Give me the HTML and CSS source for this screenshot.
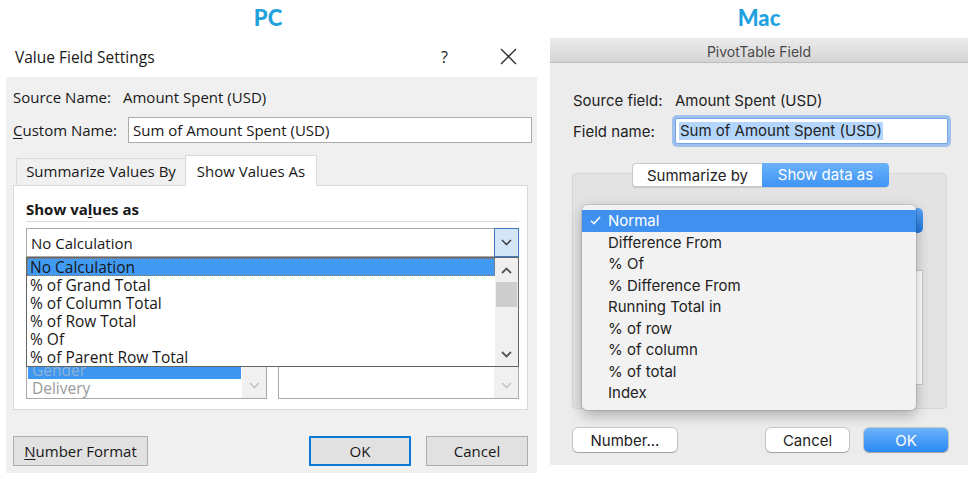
FILE: index.html
```html
<!DOCTYPE html>
<html>
<head>
<meta charset="utf-8">
<title>Value Field Settings – PC vs Mac</title>
<link rel="stylesheet" href="styles.css">
</head>
<body>
<div class="page">
  <section class="col col-pc">
    <div class="os-label">PC</div>
    <div class="win">
      <div class="win-title">
        <span class="win-title-text">Value Field Settings</span>
        <span class="win-help">?</span>
        <svg class="win-close" width="17" height="17" viewBox="0 0 17 17"><path d="M1 1 L16 16 M16 1 L1 16" stroke="#2b2b2b" stroke-width="1.3" fill="none"/></svg>
      </div>
      <div class="win-body">
        <div class="win-row win-source">
          <span class="win-lbl-source">Source Name:</span>
          <span>Amount Spent (USD)</span>
        </div>
        <div class="win-row win-custom">
          <span class="win-lbl-custom"><u>C</u>ustom Name:</span>
          <div class="win-input">Sum of Amount Spent (USD)</div>
        </div>
        <div class="win-tabs">
          <div class="win-tab">Summarize Values By</div>
          <div class="win-tab active">Show Values As</div>
        </div>
        <div class="win-panel">
          <div class="win-heading">Show va<u>l</u>ues as</div>
          <div class="win-sep"></div>
          <div class="win-combo-wrap">
            <div class="win-combo">
              <span class="win-combo-text">No Calculation</span>
              <span class="win-combo-btn"><svg width="11" height="7" viewBox="0 0 11 7"><path d="M1 1 L5.5 5.5 L10 1" stroke="#333" stroke-width="1.4" fill="none"/></svg></span>
            </div>
            <div class="win-dropdown">
              <div class="win-options">
                <div class="win-opt sel">No Calculation</div>
                <div class="win-opt">% of Grand Total</div>
                <div class="win-opt">% of Column Total</div>
                <div class="win-opt">% of Row Total</div>
                <div class="win-opt">% Of</div>
                <div class="win-opt">% of Parent Row Total</div>
              </div>
              <div class="win-scroll">
                <div class="win-arrow"><svg width="11" height="7" viewBox="0 0 11 7"><path d="M1 6 L5.5 1.5 L10 6" stroke="#555" stroke-width="1.8" fill="none"/></svg></div>
                <div class="win-thumb"></div>
                <div class="win-track"></div>
                <div class="win-arrow"><svg width="11" height="7" viewBox="0 0 11 7"><path d="M1 1 L5.5 5.5 L10 1" stroke="#555" stroke-width="1.8" fill="none"/></svg></div>
              </div>
            </div>
          </div>
          <div class="win-base">
            <div class="win-base-col">
              <div class="win-base-lbl"></div>
              <div class="win-listbox">
                <div class="win-lb-items">
                  <div class="win-lb-item hl">Gender</div>
                  <div class="win-lb-item">Delivery</div>
                </div>
                <div class="win-lb-scroll"><svg width="11" height="7" viewBox="0 0 11 7"><path d="M1 1 L5.5 5.5 L10 1" stroke="#c4c4c4" stroke-width="1.6" fill="none"/></svg></div>
              </div>
            </div>
            <div class="win-base-col">
              <div class="win-base-lbl"></div>
              <div class="win-listbox">
                <div class="win-lb-items"></div>
                <div class="win-lb-scroll"><svg width="11" height="7" viewBox="0 0 11 7"><path d="M1 1 L5.5 5.5 L10 1" stroke="#c4c4c4" stroke-width="1.6" fill="none"/></svg></div>
              </div>
            </div>
          </div>
        </div>
        <div class="win-buttons">
          <button class="win-btn win-num"><u>N</u>umber Format</button>
          <button class="win-btn win-ok">OK</button>
          <button class="win-btn win-cancel">Cancel</button>
        </div>
      </div>
    </div>
  </section>

  <section class="col col-mac">
    <div class="os-label">Mac</div>
    <div class="mac">
      <div class="mac-title">PivotTable Field</div>
      <div class="mac-body">
        <div class="mac-row mac-source">
          <span class="mac-lbl">Source field:</span>
          <span>Amount Spent (USD)</span>
        </div>
        <div class="mac-row mac-field">
          <span class="mac-lbl">Field name:</span>
          <div class="mac-input"><span class="mac-sel">Sum of Amount Spent (USD)</span></div>
        </div>
        <div class="mac-seg">
          <span class="mac-seg-item">Summarize by</span>
          <span class="mac-seg-item on">Show data as</span>
        </div>
        <div class="mac-group">
          <div class="mac-popup"></div>
          <div class="mac-list"></div>
          <div class="mac-menu">
            <div class="mac-mi on"><span class="mac-check"><svg width="11" height="9" viewBox="0 0 11 9"><path d="M1 4.8 L4 7.6 L10 1" stroke="#fff" stroke-width="1.5" fill="none"/></svg></span>Normal</div>
            <div class="mac-mi"><span class="mac-check"></span>Difference From</div>
            <div class="mac-mi"><span class="mac-check"></span>% Of</div>
            <div class="mac-mi"><span class="mac-check"></span>% Difference From</div>
            <div class="mac-mi"><span class="mac-check"></span>Running Total in</div>
            <div class="mac-mi"><span class="mac-check"></span>% of row</div>
            <div class="mac-mi"><span class="mac-check"></span>% of column</div>
            <div class="mac-mi"><span class="mac-check"></span>% of total</div>
            <div class="mac-mi"><span class="mac-check"></span>Index</div>
          </div>
        </div>
        <div class="mac-buttons">
          <button class="mac-btn mac-num">Number...</button>
          <button class="mac-btn mac-cancel">Cancel</button>
          <button class="mac-btn mac-ok">OK</button>
        </div>
      </div>
    </div>
  </section>
</div>
</body>
</html>
```

FILE: styles.css
```css
* { box-sizing: border-box; }
html, body { margin: 0; padding: 0; background: #fff; }
body { width: 975px; height: 479px; overflow: hidden; }

.page { display: flex; gap: 13px; padding-left: 6px; }
.col-pc { width: 531px; }
.col-mac { width: 418px; }

.os-label {
  height: 36px;
  line-height: 36px;
  text-align: center;
  font-family: Lato, "Open Sans", sans-serif;
  font-weight: 900;
  font-size: 22px;
  color: #1fa2de;
}
.col-pc .os-label { padding-right: 7px; }

/* ---------- Windows dialog ---------- */
.win {
  font-family: "Open Sans", "Noto Sans", sans-serif;
  font-size: 15px;
  color: #181818;
}
.win u { text-decoration-thickness: 1px; text-underline-offset: 2px; }
.win-title {
  height: 41px;
  display: flex;
  align-items: center;
  padding: 0 20px 0 9px;
  font-size: 15.5px;
}
.win-title-text { flex: 1; }
.win-help { font-size: 16px; width: 8px; }
.win-close { margin-left: 51px; display: block; }

.win-body {
  background: #f0f0f0;
  height: 396px;
  padding: 10px 5px 7px 7px;
  display: flex;
  flex-direction: column;
}
.win-row { display: flex; align-items: center; white-space: nowrap; }
.win-source { height: 20px; line-height: 20px; }
.win-lbl-source { width: 110px; }
.win-custom { margin-top: 10px; height: 26px; }
.win-lbl-custom { width: 115px; }
.win-input {
  width: 404px;
  height: 26px;
  flex-shrink: 0;
  border: 1px solid #ababab;
  background: #fff;
  padding-left: 4px;
  line-height: 24px;
}

.win-tabs {
  margin-top: 12px;
  height: 30px;
  display: flex;
  align-items: flex-end;
  padding-left: 3px;
}
.win-tab {
  height: 27px;
  width: 169px;
  border: 1px solid #d9d9d9;
  border-bottom: none;
  border-right: none;
  text-align: center;
  line-height: 25px;
  white-space: nowrap;
}
.win-tab.active {
  height: 31px;
  width: 132px;
  background: #fff;
  border-right: 1px solid #d9d9d9;
  margin-bottom: -1px;
  position: relative;
  z-index: 1;
  line-height: 30px;
}

.win-panel {
  height: 225px;
  margin-right: 4px;
  border: 1px solid #d9d9d9;
  background: #fff;
  padding: 14px 8px 10px 12px;
}
.win-heading { font-weight: 700; line-height: 18px; }
.win-sep { margin-top: 3px; height: 1px; background: #dcdcdc; }

.win-combo-wrap { position: relative; margin-top: 6px; }
.win-combo {
  height: 29px;
  border: 1px solid #a9a9a9;
  display: flex;
  align-items: center;
  background: #fff;
}
.win-combo-text { flex: 1; padding-left: 4px; }
.win-combo-btn {
  width: 25px;
  height: 29px;
  margin: -1px -1px -1px 0;
  border: 1px solid #3c7cbd;
  background: #d3e6f8;
  display: flex;
  align-items: center;
  justify-content: center;
}
.win-dropdown {
  position: absolute;
  left: 0;
  right: 0;
  top: 100%;
  height: 110px;
  border: 1px solid #646464;
  background: #fff;
  display: flex;
  z-index: 2;
}
.win-options { flex: 1; font-size: 15.5px; }
.win-opt {
  height: 18px;
  line-height: 16px;
  padding-left: 2px;
  white-space: nowrap;
  border: 1px solid transparent;
}
.win-opt.sel { background: #419bf5; border: 1px dotted #9a6d4a; }
.win-scroll {
  width: 23px;
  display: flex;
  flex-direction: column;
  background: #f0f0f0;
}
.win-arrow {
  height: 24px;
  display: flex;
  align-items: center;
  justify-content: center;
}
.win-thumb { height: 25px; margin: 0 1px; background: #cdcdcd; }
.win-track { flex: 1; }

.win-base { margin-top: 9px; display: flex; gap: 11px; }
.win-base-col { width: 241px; display: flex; flex-direction: column; }
.win-base-lbl { height: 18px; }
.win-listbox {
  margin-top: 3px;
  height: 112px;
  border: 1px solid #a9a9a9;
  background: #fff;
  display: flex;
}
.win-lb-items {
  flex: 1;
  display: flex;
  flex-direction: column;
  justify-content: flex-end;
  padding: 0 1px 1px 1px;
  color: #9a9a9a;
  font-size: 15.5px;
}
.win-lb-item { height: 18px; line-height: 18px; padding-left: 4px; }
.win-lb-item.hl { background: #3d96f0; color: #8fb4db; }
.win-lb-scroll {
  width: 24px;
  background: #f0f0f0;
  display: flex;
  align-items: flex-end;
  justify-content: center;
  padding-bottom: 9px;
}

.win-buttons {
  margin-top: 26px;
  height: 30px;
  margin-right: 4px;
  display: flex;
}
.win-btn {
  height: 30px;
  border: 1px solid #adadad;
  background: #e1e1e1;
  font: inherit;
  color: #181818;
  padding: 0;
}
.win-num { width: 135px; }
.win-ok { width: 102px; margin-left: auto; border: 2px solid #0a78d4; }
.win-cancel { width: 102px; margin-left: 15px; }

/* ---------- Mac dialog ---------- */
.mac {
  margin-top: 2px;
  font-family: Inter, "Liberation Sans", sans-serif;
  font-size: 15px;
  color: #222;
}
.mac-title {
  height: 25px;
  background: linear-gradient(#ececec, #d4d4d4);
  border-bottom: 1px solid #bcbcbc;
  text-align: center;
  line-height: 27px;
  font-size: 14px;
  color: #4a4a4a;
}
.mac-body {
  background: #ececec;
  height: 402px;
  padding: 27px 20px 13px 23px;
  display: flex;
  flex-direction: column;
}
.mac-row { display: flex; align-items: center; white-space: nowrap; }
.mac-lbl { width: 102px; flex-shrink: 0; }
.mac-source { height: 20px; }
.mac-field { margin-top: 5px; height: 32px; }
.mac-input {
  width: 273px;
  height: 26px;
  flex-shrink: 0;
  background: #fff;
  border: 1px solid #73a4e6;
  border-radius: 2px;
  box-shadow: 0 0 0 3px rgba(120, 170, 238, 0.65);
  padding-left: 3px;
  display: flex;
  align-items: center;
}
.mac-sel { background: #b4d6fd; line-height: 18px; padding: 0 1px; }

.mac-seg {
  margin-top: 16px;
  align-self: center;
  height: 24px;
  display: flex;
  position: relative;
  z-index: 1;
  border-radius: 4px;
  box-shadow: 0 1px 1px rgba(0, 0, 0, 0.12);
}
.mac-seg-item {
  width: 130px;
  height: 24px;
  line-height: 23px;
  text-align: center;
  background: #fff;
  border: 1px solid #c9c9c9;
  border-right: none;
  border-radius: 4px 0 0 4px;
}
.mac-seg-item.on {
  width: 127px;
  background: linear-gradient(#6ab2fa, #3f94f5);
  border: none;
  color: #fff;
  border-radius: 0 4px 4px 0;
}

.mac-group {
  margin: -14px 1px 0 -1px;
  height: 236px;
  background: #e3e3e3;
  border: 1px solid #d7d7d7;
  border-radius: 4px;
  position: relative;
}
.mac-popup {
  margin: 34px 0 0 17px;
  width: 333px;
  height: 25px;
  border-radius: 5px;
  background: linear-gradient(#5aa4f6, #1f78e0);
}
.mac-list {
  margin: 37px 0 0 27px;
  width: 323px;
  height: 115px;
  background: #fff;
  border: 1px solid #c9c9c9;
}
.mac-menu {
  position: absolute;
  left: 9px;
  top: 31px;
  width: 334px;
  height: 205px;
  padding-top: 5px;
  background: #f2f2f2;
  border-radius: 5px;
  box-shadow: 0 0 0 1px rgba(0, 0, 0, 0.1), 0 5px 14px rgba(0, 0, 0, 0.28);
  z-index: 2;
}
.mac-mi {
  height: 21.5px;
  line-height: 21.5px;
  display: flex;
  align-items: center;
  white-space: nowrap;
}
.mac-mi.on { background: #4090f0; color: #fff; }
.mac-check {
  width: 26px;
  padding-left: 8px;
  display: flex;
  align-items: center;
}

.mac-buttons {
  margin-top: 19px;
  height: 24px;
  display: flex;
}
.mac-btn {
  height: 24px;
  padding: 0;
  border: none;
  border-radius: 5px;
  background: #fff;
  box-shadow: 0 0 0 1px rgba(0, 0, 0, 0.16), 0 1px 1px rgba(0, 0, 0, 0.18);
  font: inherit;
  color: #222;
}
.mac-num { width: 104px; }
.mac-cancel { width: 83px; margin-left: auto; }
.mac-ok {
  width: 84px;
  margin-left: 15px;
  background: linear-gradient(#6cb4fb, #2a88f4);
  color: #fff;
}
```
